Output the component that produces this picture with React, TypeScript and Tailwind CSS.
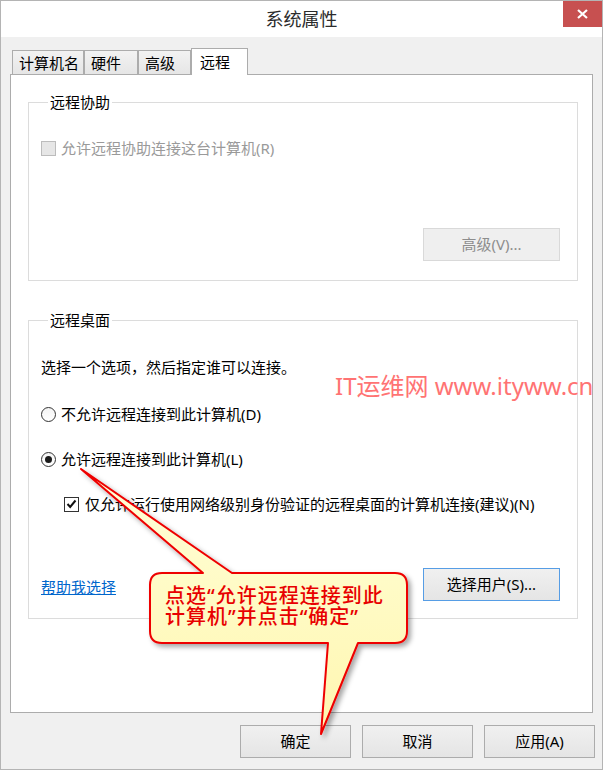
import React from "react";

const FONT = { fontFamily: '"Noto Sans", "Noto Sans CJK SC", sans-serif' };

function Radio({ checked }: { checked?: boolean }) {
    return (
        <span className="w-[15px] h-[15px] rounded-full border border-[#333] bg-gradient-to-b from-[#f4f4f4] to-white flex items-center justify-center shrink-0">
            {checked && <span className="w-[7px] h-[7px] rounded-full bg-[#1a1a1a]" />}
        </span>
    );
}

function Tab({ label, width, active }: { label: string; width: string; active?: boolean }) {
    return (
        <div
            className={`${width} border-t border-x border-[#acacac] pl-[6px] flex items-center ${active
                ? "h-[27px] -mb-px bg-white relative z-10 pl-[8px]"
                : "h-[24px] bg-gradient-to-b from-[#f2f2f2] to-[#e6e6e6]"
                }`}
        >
            <span className="text-[15px] leading-[20px]">{label}</span>
        </div>
    );
}

export default function App() {
    return (
        <div style={FONT} className="w-[603px] h-[770px] bg-[#f0f0f0] border border-[#b4b4b4] relative overflow-hidden flex flex-col text-black">
            {/* Title bar */}
            <div className="h-[36px] bg-white flex items-center justify-center shrink-0">
                <span className="text-[18px] leading-[24px] text-[#2b2b2b]">系统属性</span>
            </div>
            <div className="absolute right-0 top-0 w-[39px] h-[26px] bg-[#c75050] flex items-center justify-center">
                <svg width="11" height="10" viewBox="0 0 11 10">
                    <path d="M1 1 L10 9 M10 1 L1 9" stroke="white" strokeWidth="2.2" />
                </svg>
            </div>

            <div className="px-[9px] pt-[11px] flex flex-col">
                {/* Tabs */}
                <div className="flex items-end pl-[2px]">
                    <Tab label="计算机名" width="w-[72px]" />
                    <Tab label="硬件" width="w-[54px]" />
                    <Tab label="高级" width="w-[53px]" />
                    <Tab label="远程" width="w-[57px]" active />
                </div>

                {/* Panel */}
                <div className="h-[639px] border border-[#acacac] bg-white pl-[17px] pr-[14px] pt-[17px] flex flex-col">
                    <fieldset className="border border-[#dcdcdc] pl-[12px] pb-[19px] flex flex-col">
                        <legend className="ml-[7px] px-[2px] text-[15px] leading-[20px]">远程协助</legend>
                        <div className="mt-[26px] h-[20px] flex items-center gap-[5px]">
                            <span className="w-[15px] h-[15px] border border-[#bcbcbc] bg-[#e6e6e6] shrink-0" />
                            <span className="text-[15px] leading-[20px] text-[#9a9a9a]">允许远程协助连接这台计算机(R)</span>
                        </div>
                        <button className="mt-[70px] self-end mr-[17px] w-[137px] h-[33px] border border-[#d9d9d9] bg-[#efefef] text-[15px] text-[#8d8d8d]">
                            高级(V)...
                        </button>
                    </fieldset>

                    <fieldset className="mt-[29px] border border-[#dcdcdc] pl-[12px] pb-[17px] flex flex-col">
                        <legend className="ml-[7px] px-[2px] text-[15px] leading-[20px]">远程桌面</legend>
                        <div className="mt-[27px] h-[20px] text-[15px] leading-[20px]">选择一个选项，然后指定谁可以连接。</div>
                        <div className="mt-[27px] h-[20px] flex items-center gap-[5px]">
                            <Radio />
                            <span className="text-[15px] leading-[20px]">不允许远程连接到此计算机(D)</span>
                        </div>
                        <div className="mt-[25px] h-[20px] flex items-center gap-[5px]">
                            <Radio checked />
                            <span className="text-[15px] leading-[20px]">允许远程连接到此计算机(L)</span>
                        </div>
                        <div className="mt-[25px] h-[20px] flex items-center gap-[6px] pl-[23px]">
                            <span className="w-[15px] h-[15px] border border-[#333] bg-white flex items-center justify-center shrink-0">
                                <svg width="11" height="10" viewBox="0 0 11 10">
                                    <path d="M1.5 5 L4.2 8 L9.5 1.5" stroke="#111" strokeWidth="2" fill="none" />
                                </svg>
                            </span>
                            <span className="text-[15px] leading-[20px]">仅允许运行使用网络级别身份验证的远程桌面的计算机连接(建议)(N)</span>
                        </div>
                        <div className="mt-[54px] flex items-center justify-between mr-[17px]">
                            <span className="text-[15px] leading-[20px] text-[#0066cc] underline mt-[5px]">帮助我选择</span>
                            <button className="w-[137px] h-[33px] border border-[#569de5] bg-gradient-to-b from-[#f0f0f0] to-[#e5e5e5] text-[15px]">
                                选择用户(S)...
                            </button>
                        </div>
                    </fieldset>
                </div>

                {/* Dialog buttons */}
                <div className="mt-[12px] -mr-[2px] flex justify-end gap-[11px]">
                    {["确定", "取消", "应用(A)"].map(label => (
                        <button
                            key={label}
                            className="w-[111px] h-[33px] border border-[#acacac] bg-gradient-to-b from-[#f0f0f0] to-[#e5e5e5] text-[15px]"
                        >
                            {label}
                        </button>
                    ))}
                </div>
            </div>

            {/* Watermark */}
            <div className="absolute left-[334px] top-[370px] text-[24px] leading-[30px] text-[#ff7373] whitespace-nowrap">
                IT运维网 www.ityww.cn
            </div>

            {/* Callout */}
            <svg className="absolute left-0 top-0 pointer-events-none" width="603" height="770" viewBox="0 0 603 770">
                <defs>
                    <linearGradient id="callFill" x1="0" y1="0" x2="0" y2="1">
                        <stop offset="0" stopColor="#ffffd8" />
                        <stop offset="1" stopColor="#fff6b0" />
                    </linearGradient>
                    <filter id="callShadow" x="-20%" y="-20%" width="140%" height="140%">
                        <feDropShadow dx="3" dy="3" stdDeviation="2.5" floodColor="#000" floodOpacity="0.35" />
                    </filter>
                </defs>
                <path
                    d="M161 572 L202 572 L80 468 L231 572 L394 572 Q406 572 406 584 L406 630 Q406 642 394 642 L357 642 L320 733 L327 642 L161 642 Q149 642 149 630 L149 584 Q149 572 161 572 Z"
                    fill="url(#callFill)"
                    stroke="#ee0000"
                    strokeWidth="2"
                    strokeLinejoin="round"
                    filter="url(#callShadow)"
                />
            </svg>
            <div className="absolute left-[164px] top-[585px] flex flex-col gap-[1px] text-[20px] leading-[20px] tracking-[1px] text-[#e80000] font-medium">
                <span>点选“允许远程连接到此</span>
                <span>计算机”并点击“确定”</span>
            </div>
        </div>
    );
}
